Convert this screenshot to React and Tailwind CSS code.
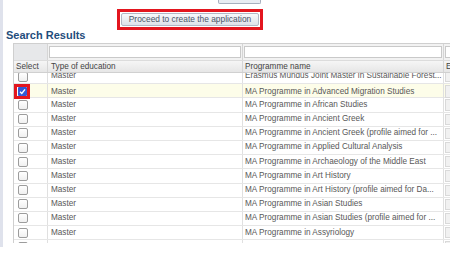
import React from "react";

const rows = [
  { type: "Master", name: "Erasmus Mundus Joint Master in Sustainable Forest..." },
  { type: "Master", name: "MA Programme in Advanced Migration Studies", checked: true },
  { type: "Master", name: "MA Programme in African Studies" },
  { type: "Master", name: "MA Programme in Ancient Greek" },
  { type: "Master", name: "MA Programme in Ancient Greek (profile aimed for ..." },
  { type: "Master", name: "MA Programme in Applied Cultural Analysis" },
  { type: "Master", name: "MA Programme in Archaeology of the Middle East" },
  { type: "Master", name: "MA Programme in Art History" },
  { type: "Master", name: "MA Programme in Art History (profile aimed for Da..." },
  { type: "Master", name: "MA Programme in Asian Studies" },
  { type: "Master", name: "MA Programme in Asian Studies (profile aimed for ..." },
  { type: "Master", name: "MA Programme in Assyriology" },
  { type: "", name: "" },
];

function Checkbox({ checked }) {
  if (checked) {
    return (
      <div className="w-[16px] h-[15px] border-[3px] border-[#e3161f] flex items-center justify-center bg-white">
        <div className="w-[9px] h-[9px] rounded-[1px] bg-[#3259d6] flex items-center justify-center">
          <svg width="7" height="7" viewBox="0 0 10 10">
            <path d="M1.5 5.2 L4 7.8 L8.6 2" fill="none" stroke="white" strokeWidth="2" />
          </svg>
        </div>
      </div>
    );
  }
  return (
    <div className="w-[10px] h-[10px] rounded-[2px] border border-[#9c9c9c] bg-gradient-to-b from-white to-[#f0f0f0]" />
  );
}

export default function App() {
  return (
    <div
      className="w-[450px] h-[254px] bg-white overflow-hidden"
      style={{ fontFamily: '"Liberation Sans", Arial, sans-serif' }}
    >
      <div className="h-[247px] border-l-[3px] border-[#dfe2ec] flex flex-col">
        <div className="ml-[215px] w-[43px] h-[4px] border border-t-0 border-[#a7afbe] bg-[#e8ecf2] rounded-b-[2px]" />

        <div className="ml-[114px] mt-[5px] w-[146px] h-[21px] border-[3px] border-[#e3161f] p-[1px] flex">
          <button className="flex-1 rounded-[2px] border border-[#b0b8c6] bg-gradient-to-b from-[#f8f9fb] to-[#dde2ea] text-[8.4px] leading-none text-[#4a5568] flex items-center justify-center">
            Proceed to create the application
          </button>
        </div>

        <div className="ml-[3px] mt-[-1px] text-[11px] leading-[13px] font-bold text-[#1f4d7c]">
          Search Results
        </div>

        <div className="ml-[10px] mt-[1px] w-[437px] border-t border-l border-[#cfcfcf] text-[8.2px] leading-none">
          <div className="grid grid-cols-[34px_195px_201px_20px] h-[17px] bg-[#f2f2f2] border-b border-[#dcdcdc]">
            <div className="bg-[#e7e8ea] border-r border-[#d5d5d5]" />
            <div className="px-[1px] py-[2px] border-r border-[#d5d5d5]">
              <div className="h-full bg-white border border-[#c9c9c9]" />
            </div>
            <div className="px-[1px] py-[2px] border-r border-[#d5d5d5]">
              <div className="h-full bg-white border border-[#c9c9c9]" />
            </div>
            <div className="px-[1px] py-[2px]">
              <div className="h-full bg-white border border-[#c9c9c9]" />
            </div>
          </div>

          <div className="grid grid-cols-[34px_195px_201px_20px] h-[12px] bg-gradient-to-b from-[#f6f6f6] to-[#e6e6e6] border-b border-[#d0d0d0] text-[#444]">
            <div className="pl-[2px] flex items-end pb-[1px] border-r border-[#d5d5d5]">Select</div>
            <div className="pl-[3px] flex items-end pb-[1px] border-r border-[#d5d5d5]">Type of education</div>
            <div className="pl-[2px] flex items-end pb-[1px] border-r border-[#d5d5d5]">Programme name</div>
            <div className="pl-[2px] flex items-end pb-[1px]">E</div>
          </div>

          <div className="h-[170px] overflow-hidden">
            <div className="-mt-[3px]">
              {rows.map((r, i) => (
                <div
                  key={i}
                  className={`grid grid-cols-[34px_195px_201px_20px] h-[14.2px] border-b border-[#e6e6e6] text-[#585858] ${
                    r.checked ? "bg-[#fdfde9]" : "bg-white"
                  }`}
                >
                  <div className={`flex items-center border-r border-[#e0e0e0] ${r.checked ? "pl-0" : "pl-[4px]"}`}>
                    <Checkbox checked={r.checked} />
                  </div>
                  <div className="pl-[3px] flex items-center border-r border-[#e0e0e0] whitespace-nowrap overflow-hidden">
                    {r.type}
                  </div>
                  <div className="pl-[2px] flex items-center border-r border-[#e0e0e0] whitespace-nowrap overflow-hidden">
                    {r.name}
                  </div>
                  <div className="p-[1px]">
                    <div className="h-full bg-[#f1f1f1] border border-[#d9d9d9]" />
                  </div>
                </div>
              ))}
            </div>
          </div>
        </div>
      </div>
    </div>
  );
}
